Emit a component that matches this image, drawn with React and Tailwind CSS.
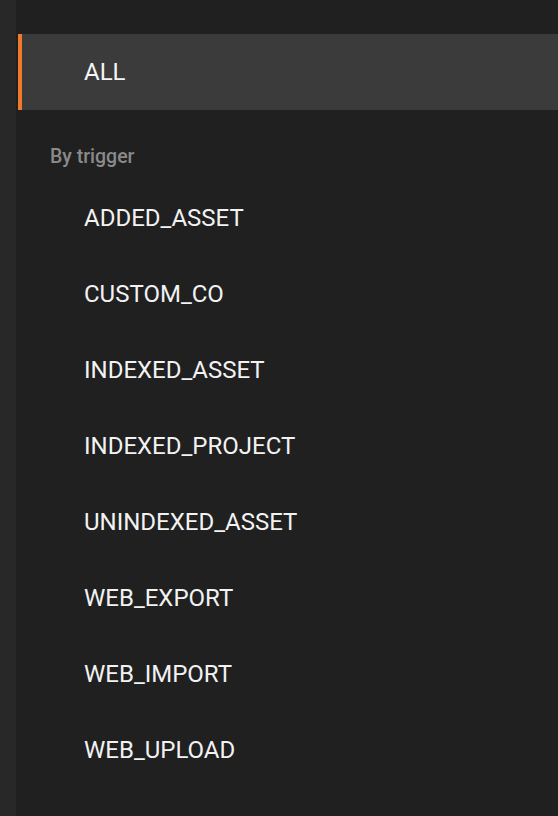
const triggers = [
  'ADDED_ASSET',
  'CUSTOM_CO',
  'INDEXED_ASSET',
  'INDEXED_PROJECT',
  'UNINDEXED_ASSET',
  'WEB_EXPORT',
  'WEB_IMPORT',
  'WEB_UPLOAD',
];

function Row({ label, active }) {
  return (
    <div
      className={
        'flex h-[76px] items-center text-[24px] leading-none ' +
        (active
          ? 'border-l-4 border-[#f07a2b] bg-[#3b3b3b] pl-[62px] text-[#f5f5f5]'
          : 'pl-[66px] text-[#f2f2f2]')
      }
    >
      {label}
    </div>
  );
}

export default function App() {
  return (
    <div
      className="flex h-[816px] w-[558px] overflow-hidden bg-[#202020]"
      style={{ fontFamily: 'Roboto, "Liberation Sans", sans-serif' }}
    >
      <div className="w-4 shrink-0 bg-[#282828]" />
      <div className="ml-[2px] flex-1 pt-[34px]">
        <Row label="ALL" active />
        <div className="pl-8 pt-[35px] pb-[11px] text-[19.5px] font-medium leading-6 text-[#8a8a8a]">
          By trigger
        </div>
        {triggers.map((t) => (
          <Row key={t} label={t} />
        ))}
      </div>
    </div>
  );
}
